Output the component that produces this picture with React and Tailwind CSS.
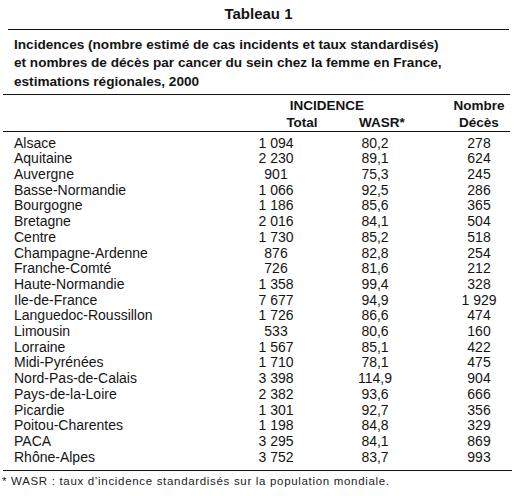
import React from 'react';

const rows = [
  ['Alsace', '1 094', '80,2', '278'],
  ['Aquitaine', '2 230', '89,1', '624'],
  ['Auvergne', '901', '75,3', '245'],
  ['Basse-Normandie', '1 066', '92,5', '286'],
  ['Bourgogne', '1 186', '85,6', '365'],
  ['Bretagne', '2 016', '84,1', '504'],
  ['Centre', '1 730', '85,2', '518'],
  ['Champagne-Ardenne', '876', '82,8', '254'],
  ['Franche-Comté', '726', '81,6', '212'],
  ['Haute-Normandie', '1 358', '99,4', '328'],
  ['Ile-de-France', '7 677', '94,9', '1 929'],
  ['Languedoc-Roussillon', '1 726', '86,6', '474'],
  ['Limousin', '533', '80,6', '160'],
  ['Lorraine', '1 567', '85,1', '422'],
  ['Midi-Pyrénées', '1 710', '78,1', '475'],
  ['Nord-Pas-de-Calais', '3 398', '114,9', '904'],
  ['Pays-de-la-Loire', '2 382', '93,6', '666'],
  ['Picardie', '1 301', '92,7', '356'],
  ['Poitou-Charentes', '1 198', '84,8', '329'],
  ['PACA', '3 295', '84,1', '869'],
  ['Rhône-Alpes', '3 752', '83,7', '993'],
];

const App = () => {
  return (
    <div className="w-[517px] h-[496px] bg-white text-[#141414] overflow-hidden" style={{ fontFamily: '"Liberation Sans", Arial, sans-serif' }}>
      {/* Title */}
      <div className="pt-[4px] text-center text-[15px] font-bold leading-[20px]">Tableau 1</div>
      <div className="mt-[5px] ml-[8px] w-[501px] h-px bg-[#111]" />

      <div className="ml-[3px] w-[507px]">
        {/* Caption */}
        <div className="pt-[5.5px] pl-[11px] text-[13.6px] font-bold leading-[18.7px]">
          Incidences (nombre estimé de cas incidents et taux standardisés)
          <br />
          et nombres de décès par cancer du sein chez la femme en France,
          <br />
          estimations régionales, 2000
        </div>
        <div className="mt-[2.5px] h-px bg-[#111]" />

        {/* Column headers */}
        <div className="pt-[1.5px] text-[13.5px] font-bold leading-[17px]">
          <div className="grid grid-cols-[248px_152px_46px_60px]">
            <div />
            <div className="text-center">INCIDENCE</div>
            <div />
            <div className="text-center">Nombre</div>
          </div>
          <div className="grid grid-cols-[248px_102px_58px_38px_60px]">
            <div />
            <div className="text-center">Total</div>
            <div className="text-center">WASR*</div>
            <div />
            <div className="text-center">Décès</div>
          </div>
        </div>
        <div className="mt-[0.5px] h-px bg-[#111]" />

        {/* Body */}
        <div className="pt-[3.5px] pb-[4.5px] text-[14px] leading-[15.7px]">
          {rows.map((r) => (
            <div key={r[0]} className="grid grid-cols-[248px_50px_148px_60px]">
              <div className="pl-[11px]">{r[0]}</div>
              <div className="text-center whitespace-nowrap">{r[1]}</div>
              <div className="text-center">{r[2]}</div>
              <div className="text-center whitespace-nowrap">{r[3]}</div>
            </div>
          ))}
        </div>
        <div className="w-[509px] h-px bg-[#111]" />
      </div>

      {/* Footnote */}
      <div className="pt-[3px] pl-[2px] text-[11.5px] leading-[14px] tracking-[0.68px] text-[#222]">
        * WASR : taux d’incidence standardisés sur la population mondiale.
      </div>
    </div>
  );
};

export default App;
